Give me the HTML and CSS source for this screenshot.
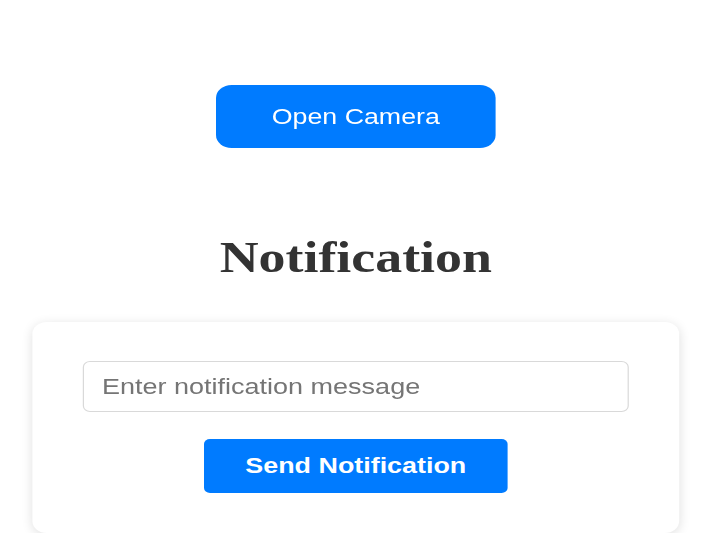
FILE: index.html
```html
<!DOCTYPE html>
<html lang="en">
<head>
<meta charset="utf-8">
<title>Notification</title>
<link rel="stylesheet" href="styles.css">
</head>
<body>
<div class="page">
  <button class="camera-btn" type="button">Open Camera</button>
  <h1 class="title">Notification</h1>
  <div class="card">
    <input class="message" type="text" placeholder="Enter notification message">
    <button class="send-btn" type="button">Send Notification</button>
  </div>
</div>
</body>
</html>
```

FILE: styles.css
```css
html, body {
  margin: 0;
  padding: 0;
  background: #ffffff;
  overflow: hidden;
}

.page {
  width: 593px;
  padding-top: 85px;
  display: flex;
  flex-direction: column;
  align-items: center;
  transform: scaleX(1.2);
  transform-origin: 0 0;
  font-family: "Liberation Sans", Arial, sans-serif;
}

.camera-btn {
  width: 233px;
  height: 63px;
  border: none;
  border-radius: 13px;
  background: #007bff;
  color: #ffffff;
  font-family: "Liberation Sans", Arial, sans-serif;
  font-size: 22.3px;
  padding: 0;
}

.title {
  margin: 84px 0 0;
  font-family: "Liberation Serif", "Times New Roman", serif;
  font-weight: bold;
  font-size: 44.9px;
  line-height: 50px;
  color: #333333;
}

.card {
  box-sizing: border-box;
  width: 539px;
  margin-top: 40px;
  padding: 39px 42px 40px;
  background: #ffffff;
  border-radius: 12px;
  box-shadow: 0 2px 10px rgba(0, 0, 0, 0.12);
  display: flex;
  flex-direction: column;
  align-items: center;
  gap: 27px;
}

.message {
  box-sizing: border-box;
  width: 100%;
  height: 51px;
  padding: 0 15px;
  border: 1px solid #d9d9d9;
  border-radius: 6px;
  font-family: "Liberation Sans", Arial, sans-serif;
  font-size: 22.5px;
  color: #333333;
  outline: none;
}

.message::placeholder {
  color: #757575;
}

.send-btn {
  width: 253px;
  height: 54px;
  border: none;
  border-radius: 5px;
  background: #007bff;
  color: #ffffff;
  font-family: "Liberation Sans", Arial, sans-serif;
  font-weight: bold;
  font-size: 22.4px;
  padding: 0;
}
```
